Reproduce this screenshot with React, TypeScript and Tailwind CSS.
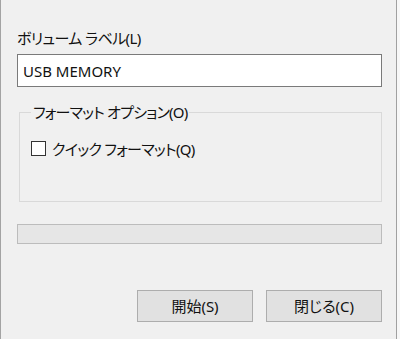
const UI_FONT = "font-['Noto_Sans','Noto_Sans_CJK_JP',sans-serif] [font-feature-settings:'palt']"

function DialogButton({ label }: { label: string }) {
  return (
    <button
      type="button"
      className={`h-[32px] w-[116px] border border-[#adadad] bg-[#e1e1e1] text-[15px] leading-[20px] text-[#111111] ${UI_FONT}`}
    >
      {label}
    </button>
  )
}

export default function App() {
  return (
    <div className="flex h-[339px] w-[400px] overflow-hidden bg-[#f0f0f0]">
      {/* left window edge */}
      <div className="w-px bg-[#a3a3a3]" />

      <div className={`flex flex-1 flex-col pl-[16px] pr-[14px] pt-[28px] text-[15px] text-[#111111] ${UI_FONT}`}>
        {/* Volume label */}
        <label className="leading-[20px] tracking-[-0.6px]">ボリューム ラベル(L)</label>
        <div className="mt-[6px] flex h-[33px] items-center border border-[#7a7a7a] bg-white pl-[5px]">
          <span className="leading-[20px]">USB MEMORY</span>
        </div>

        {/* Format options */}
        <fieldset className="ml-[2px] mt-[15px] border border-[#d9d9d9] px-[11px] pb-[45px]">
          <legend className="px-[2px] leading-[20px] tracking-[-0.8px]">フォーマット オプション(O)</legend>
          <div className="mt-[19px] flex h-[15px] items-center gap-[6px]">
            <span className="h-[15px] w-[15px] border border-[#333333] bg-white" />
            <span className="leading-[20px] tracking-[-0.7px]">クイック フォーマット(Q)</span>
          </div>
        </fieldset>

        {/* Progress bar */}
        <div className="mt-[22px] h-[20px] border border-[#bcbcbc] bg-[#e6e6e6]" />

        {/* Buttons */}
        <div className="mt-[46px] flex justify-end gap-[13px]">
          <DialogButton label="開始(S)" />
          <DialogButton label="閉じる(C)" />
        </div>
      </div>

      {/* right window edge */}
      <div className="w-px bg-[#a0a0a0]" />
      <div className="w-[3px] bg-[#f7f7f7]" />
    </div>
  )
}
